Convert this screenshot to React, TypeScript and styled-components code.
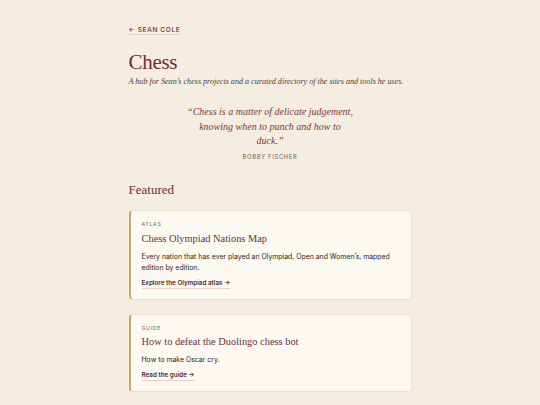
import styled, { createGlobalStyle } from 'styled-components';

const GlobalStyle = createGlobalStyle`
  html, body {
    margin: 0;
    padding: 0;
    background: #f5ede1;
  }
  body {
    font-family: Inter, "Liberation Sans", sans-serif;
    color: #3a302e;
  }
`;

const serif = `"Liberation Serif", "Times New Roman", serif`;

type Item = {
  kind: string;
  title: string;
  text: string;
  cta: string;
};

const featured: Item[] = [
  {
    kind: 'Atlas',
    title: 'Chess Olympiad Nations Map',
    text: "Every nation that has ever played an Olympiad, Open and Women\u2019s, mapped edition by edition.",
    cta: 'Explore the Olympiad atlas',
  },
  {
    kind: 'Guide',
    title: 'How to defeat the Duolingo chess bot',
    text: 'How to make Oscar cry.',
    cta: 'Read the guide',
  },
];

function App() {
  return (
    <>
      <GlobalStyle />
      <Page>
        <Column>
          <BackLink href="#">&larr; Sean Cole</BackLink>

          <Header>
            <h1>Chess</h1>
            <p>A hub for Sean&rsquo;s chess projects and a curated directory of the sites and tools he uses.</p>
          </Header>

          <Quote>
            <blockquote>
              &ldquo;Chess is a matter of delicate judgement,
              <br />
              knowing when to punch and how to
              <br />
              duck.&rdquo;
            </blockquote>
            <cite>Bobby Fischer</cite>
          </Quote>

          <SectionTitle>Featured</SectionTitle>

          <CardList>
            {featured.map((item) => (
              <Card key={item.title}>
                <Kind>{item.kind}</Kind>
                <CardTitle>{item.title}</CardTitle>
                <CardText>{item.text}</CardText>
                <CardLink href="#">{item.cta} &rarr;</CardLink>
              </Card>
            ))}
          </CardList>
        </Column>
      </Page>
    </>
  );
}

const Page = styled.main`
  min-height: 405px;
  box-sizing: border-box;
  display: flex;
  justify-content: center;
  padding: 26px 0 13px;
`;

const Column = styled.div`
  width: 283px;
  display: flex;
  flex-direction: column;
`;

const BackLink = styled.a`
  align-self: flex-start;
  font-size: 6.5px;
  font-weight: 500;
  letter-spacing: 0.1em;
  text-transform: uppercase;
  color: #6e2f33;
  text-decoration: none;
  line-height: 8px;
  border-bottom: 1px solid #e4d3bd;
`;

const Header = styled.header`
  margin-top: 15px;

  h1 {
    margin: 0;
    font-family: ${serif};
    font-weight: 400;
    font-size: 21px;
    line-height: 24px;
    letter-spacing: -0.3px;
    color: #6e2f33;
  }

  p {
    margin: 2px 0 0;
    font-family: ${serif};
    font-style: italic;
    font-size: 8.1px;
    line-height: 12px;
    color: #4a3e3a;
    white-space: nowrap;
  }
`;

const Quote = styled.figure`
  margin: 17px auto 0;
  text-align: center;

  blockquote {
    margin: 0;
    font-family: ${serif};
    font-style: italic;
    font-size: 10px;
    line-height: 14.5px;
    color: #7a3a3e;
  }

  cite {
    display: block;
    margin-top: 4px;
    font-style: normal;
    font-size: 5.8px;
    line-height: 7px;
    letter-spacing: 0.12em;
    text-transform: uppercase;
    color: #6f625c;
  }
`;

const SectionTitle = styled.h2`
  margin: 20.5px 0 0;
  font-family: ${serif};
  font-weight: 400;
  font-size: 13px;
  line-height: 20px;
  color: #6e2f33;
`;

const CardList = styled.div`
  margin-top: 10px;
  display: flex;
  flex-direction: column;
  gap: 14px;
`;

const Card = styled.article`
  background: #fcf9f3;
  border: 1px solid #ece2d3;
  border-left: 2px solid #c8a868;
  border-radius: 4px;
  padding: 9px 12px 10px 11px;
  display: flex;
  flex-direction: column;
  align-items: flex-start;
`;

const Kind = styled.span`
  font-size: 5.2px;
  letter-spacing: 0.14em;
  text-transform: uppercase;
  color: #7a6a63;
  line-height: 8px;
`;

const CardTitle = styled.h3`
  margin: 2.5px 0 0;
  font-family: ${serif};
  font-weight: 400;
  font-size: 10.4px;
  line-height: 16px;
  color: #6e2f33;
`;

const CardText = styled.p`
  margin: 4px 0 0;
  font-size: 6.9px;
  line-height: 11px;
  color: #2c2523;
`;

const CardLink = styled.a`
  margin-top: 6px;
  font-size: 6.3px;
  font-weight: 600;
  line-height: 9px;
  color: #5a2a2e;
  text-decoration: none;
  border-bottom: 1px solid #e8d2c6;
`;

export default App;
